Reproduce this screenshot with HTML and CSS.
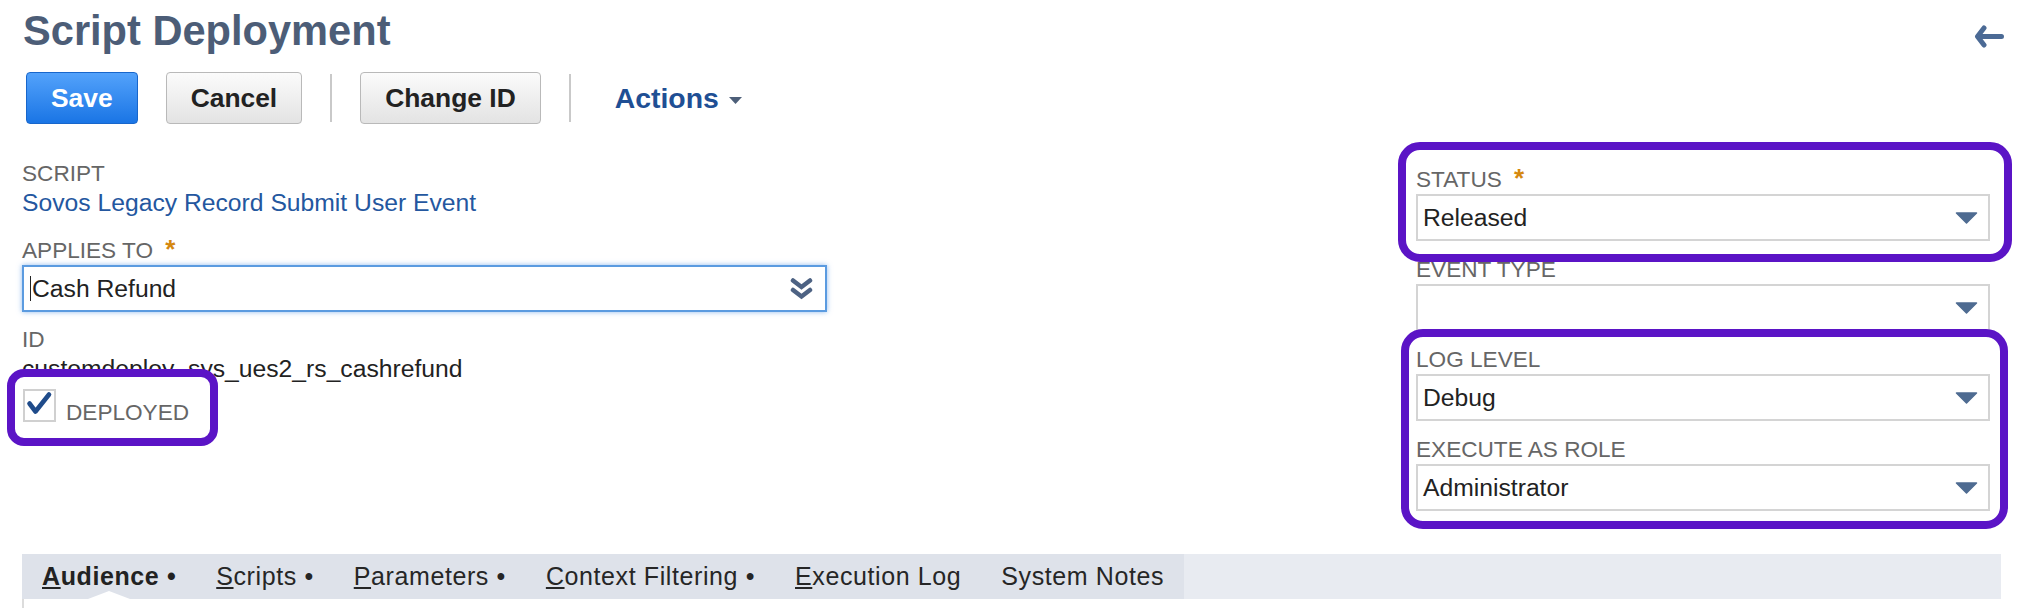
FILE: index.html
```html
<!DOCTYPE html>
<html lang="en">
<head>
<meta charset="utf-8">
<title>Script Deployment</title>
<link rel="stylesheet" href="styles.css">
</head>
<body>
<div class="page">
  <header class="title-row">
    <h1 class="title">Script Deployment</h1>
    <svg class="back" viewBox="0 0 30 24" aria-label="Back">
      <path d="M27.5 11.5 H4 M10 3 L3.5 11.5 L10 20" fill="none" stroke="#4b6a95" stroke-width="5" stroke-linecap="round" stroke-linejoin="round"/>
    </svg>
  </header>

  <div class="toolbar">
    <button class="btn btn-primary">Save</button>
    <button class="btn">Cancel</button>
    <span class="sep"></span>
    <button class="btn">Change ID</button>
    <span class="sep"></span>
    <span class="actions">Actions
      <svg class="caret" viewBox="0 0 13 7"><path d="M0 0 H13 L6.5 7 Z" fill="#4d5f79"/></svg>
    </span>
  </div>

  <div class="form">
    <div class="col-left">
      <div class="field f-script">
        <div class="label">SCRIPT</div>
        <a class="value link" href="#">Sovos Legacy Record Submit User Event</a>
      </div>
      <div class="field f-applies">
        <div class="label">APPLIES TO <span class="req">*</span></div>
        <div class="input">
          <span class="text-caret"></span>
          <span class="input-text">Cash Refund</span>
          <svg class="dbl" viewBox="0 0 23 24">
            <path d="M3 3.5 L11.5 10 L20 3.5 M3 13 L11.5 19.5 L20 13" fill="none" stroke="#4d6283" stroke-width="4.5" stroke-linecap="round" stroke-linejoin="miter"/>
          </svg>
        </div>
      </div>
      <div class="field f-id">
        <div class="label">ID</div>
        <div class="value">customdeploy_sys_ues2_rs_cashrefund</div>
      </div>
      <div class="check-row">
        <span class="checkbox">
          <svg viewBox="0 0 29 29"><path d="M4.5 12.5 L10.5 20.5 L24 3.5" fill="none" stroke="#1f4b8a" stroke-width="4.6" stroke-linecap="round" stroke-linejoin="round"/></svg>
        </span>
        <span class="label check-label">DEPLOYED</span>
      </div>
    </div>

    <div class="col-right">
      <div class="field hl hl-status">
        <div class="label">STATUS <span class="req">*</span></div>
        <div class="select"><span>Released</span>
          <svg class="tri" viewBox="0 0 23 12"><path d="M1.5 1 H21.5 L11.5 11 Z" fill="#4e6b91" stroke="#4e6b91" stroke-width="1.5" stroke-linejoin="round"/></svg>
        </div>
      </div>
      <div class="field">
        <div class="label">EVENT TYPE</div>
        <div class="select"><span></span>
          <svg class="tri" viewBox="0 0 23 12"><path d="M1.5 1 H21.5 L11.5 11 Z" fill="#4e6b91" stroke="#4e6b91" stroke-width="1.5" stroke-linejoin="round"/></svg>
        </div>
      </div>
      <div class="group hl hl-log">
        <div class="field">
          <div class="label">LOG LEVEL</div>
          <div class="select"><span>Debug</span>
            <svg class="tri" viewBox="0 0 23 12"><path d="M1.5 1 H21.5 L11.5 11 Z" fill="#4e6b91" stroke="#4e6b91" stroke-width="1.5" stroke-linejoin="round"/></svg>
          </div>
        </div>
        <div class="field">
          <div class="label">EXECUTE AS ROLE</div>
          <div class="select"><span>Administrator</span>
            <svg class="tri" viewBox="0 0 23 12"><path d="M1.5 1 H21.5 L11.5 11 Z" fill="#4e6b91" stroke="#4e6b91" stroke-width="1.5" stroke-linejoin="round"/></svg>
          </div>
        </div>
      </div>
    </div>
  </div>

  <nav class="tabs">
    <div class="tab-list">
      <span class="tab active"><u>A</u>udience <span class="dot">•</span></span>
      <span class="tab"><u>S</u>cripts <span class="dot">•</span></span>
      <span class="tab"><u>P</u>arameters <span class="dot">•</span></span>
      <span class="tab"><u>C</u>ontext Filtering <span class="dot">•</span></span>
      <span class="tab"><u>E</u>xecution Log</span>
      <span class="tab">System Notes</span>
    </div>
  </nav>
  <div class="panel"></div>
</div>
</body>
</html>
```

FILE: styles.css
```css
*, *::before, *::after { box-sizing: border-box; }

html, body {
  margin: 0;
  padding: 0;
  background: #ffffff;
}

body {
  font-family: "Liberation Sans", Arial, sans-serif;
  color: #222222;
  width: 2023px;
  height: 608px;
  overflow: hidden;
}

.page {
  padding: 7px 22px 0 22px;
}

/* Title */
.title-row {
  display: flex;
  justify-content: space-between;
  align-items: flex-start;
}

.title {
  margin: 0;
  font-size: 41.6px;
  line-height: 48px;
  font-weight: bold;
  color: #4c5d77;
  padding-left: 1px;
}

.back {
  width: 30px;
  height: 24px;
  margin-top: 18px;
  margin-right: -3px;
}

/* Toolbar */
.toolbar {
  margin-top: 17px;
  padding-left: 4px;
  height: 52px;
  display: flex;
  align-items: center;
  gap: 28px;
}

.btn {
  height: 52px;
  padding: 0 24px;
  border: 1px solid #b9b9b9;
  border-radius: 4px;
  background: linear-gradient(#fbfbfb, #e3e3e3);
  font-family: "Liberation Sans", Arial, sans-serif;
  font-weight: bold;
  font-size: 26.4px;
  color: #222222;
}

.btn-primary {
  background: linear-gradient(#53a2fb, #1a75e5);
  border-color: #1866cb;
  color: #ffffff;
}

.sep {
  width: 2px;
  height: 48px;
  background: #c9c9c9;
}

.actions {
  margin-left: 16px;
  display: flex;
  align-items: center;
  font-weight: bold;
  font-size: 28.4px;
  color: #1f4f94;
}

.caret {
  width: 13px;
  height: 7px;
  margin-left: 10px;
  margin-top: 4px;
}

/* Form */
.form {
  margin-top: 36px;
  display: flex;
  justify-content: space-between;
  align-items: flex-start;
}

.col-left {
  width: 805px;
}

.col-right {
  width: 574px;
  margin-right: 11px;
  padding-top: 4px;
  display: flex;
  flex-direction: column;
  gap: 15px;
}

.group {
  display: flex;
  flex-direction: column;
  gap: 15px;
}

.label {
  font-size: 22.6px;
  line-height: 28px;
  color: #666666;
  white-space: nowrap;
}

.req {
  color: #d5880f;
  font-weight: bold;
  font-size: 26px;
  margin-left: 6px;
}

.value {
  display: block;
  font-size: 24.7px;
  line-height: 29px;
  color: #222222;
  white-space: nowrap;
}

.link {
  color: #24579f;
  text-decoration: none;
}

.f-script { margin-bottom: 18px; }
.f-applies { margin-bottom: 14px; }
.f-id { margin-bottom: 6px; }

.input {
  height: 47px;
  border: 2px solid #5b9be0;
  box-shadow: 0 0 5px rgba(70, 140, 225, 0.6);
  display: flex;
  align-items: center;
  padding: 0 12px 0 6px;
  font-size: 24.7px;
  background: #ffffff;
}

.text-caret {
  width: 1px;
  height: 25px;
  background: #222222;
  margin-right: 1px;
}

.dbl {
  width: 23px;
  height: 24px;
  margin-left: auto;
}

.check-row {
  display: flex;
  align-items: flex-start;
  position: relative;
  z-index: 1;
  padding-left: 1px;
}

.check-row::before {
  content: "";
  position: absolute;
  left: -15px;
  top: -20px;
  width: 211px;
  height: 77px;
  border: 8px solid #5b14c6;
  border-radius: 17px;
  background: #ffffff;
  z-index: -1;
}

.checkbox {
  width: 33px;
  height: 33px;
  border: 2px solid #d0d0d0;
  background: #ffffff;
  display: flex;
  align-items: center;
  justify-content: center;
}

.checkbox svg {
  width: 29px;
  height: 29px;
}

.check-label {
  margin-left: 10px;
  margin-top: 10px;
}

.select {
  height: 47px;
  border: 2px solid #d4d4d4;
  display: flex;
  align-items: center;
  padding: 0 10px 0 5px;
  font-size: 24.7px;
  color: #222222;
  background: #ffffff;
}

.tri {
  width: 23px;
  height: 12px;
  margin-left: auto;
}

/* Highlight frames (annotation overlays) */
.hl {
  position: relative;
}

.hl::after {
  content: "";
  position: absolute;
  border: 8px solid #5b14c6;
  pointer-events: none;
  z-index: 2;
}

.hl-status::after {
  top: -22px;
  right: -22px;
  bottom: -21px;
  left: -18px;
  border-radius: 22px;
}

.hl-log::after {
  top: -17px;
  right: -18px;
  bottom: -18px;
  left: -15px;
  border-radius: 22px;
}

/* Tabs */
.tabs {
  margin-top: 43px;
  height: 45px;
  display: flex;
  background: #e8ebf1;
}

.tab-list {
  display: flex;
  background: #dee2ea;
}

.tab {
  position: relative;
  display: flex;
  align-items: center;
  padding: 0 20px;
  font-size: 25px;
  letter-spacing: 0.6px;
  color: #262626;
  white-space: pre;
}

.tab.active {
  font-weight: bold;
  color: #222222;
}

.tab.active::after {
  content: "";
  position: absolute;
  left: 50%;
  bottom: 0;
  transform: translateX(-50%);
  border-left: 21px solid transparent;
  border-right: 21px solid transparent;
  border-bottom: 8px solid #ffffff;
}

.dot {
  font-size: 25px;
}

.panel {
  height: 20px;
  border-left: 2px solid #dcdcdc;
}
```
